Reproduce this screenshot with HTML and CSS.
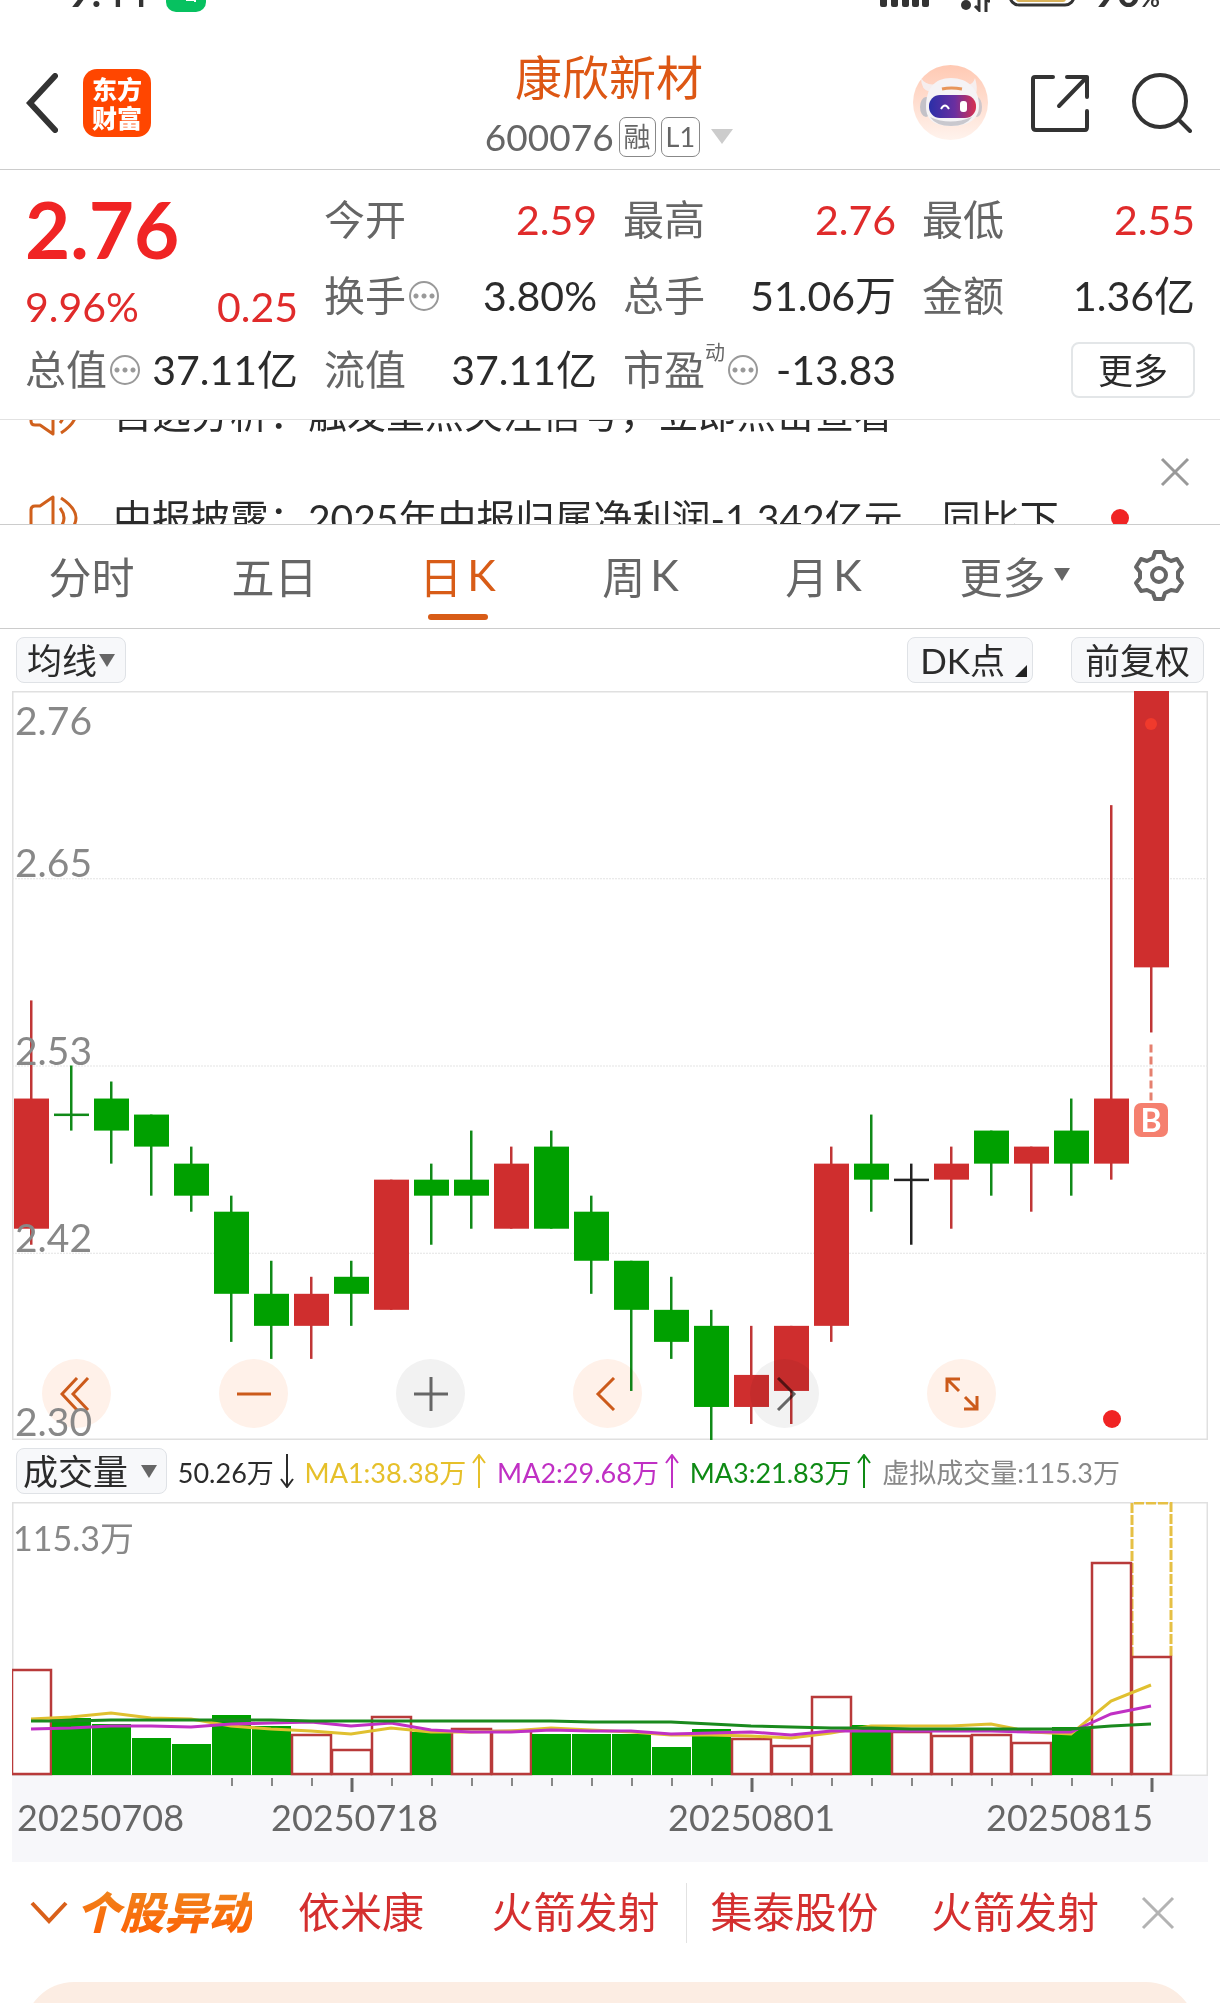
FILE: index.html
```html
<!DOCTYPE html>
<html lang="zh-CN">
<head>
<meta charset="utf-8">
<meta name="viewport" content="width=device-width, initial-scale=1">
<title>康欣新材 600076</title>
<link rel="stylesheet" href="styles.css">
</head>
<body>
<div class="status">
  <div class="status-side">
    <span class="clock">9:44</span>
    <svg class="status-app" viewBox="0 0 40 40" aria-hidden="true"><rect width="40" height="40" rx="10" fill="#07c160"/><path d="M20 28h9v2" fill="none" stroke="#fff" stroke-width="2"/></svg>
  </div>
  <div class="status-side">
    <svg class="signal" viewBox="0 0 50 20" aria-hidden="true"><g fill="#333"><rect y="10" width="7" height="10" rx="2"/><rect x="11" y="8" width="7" height="12" rx="2"/><rect x="22" y="5" width="7" height="15" rx="2"/><rect x="32" y="2" width="7" height="18" rx="2"/><rect x="42" width="7" height="20" rx="2"/></g></svg>
    <svg class="wifi" viewBox="0 0 34 24" aria-hidden="true"><g fill="none" stroke="#333" stroke-width="3"><path d="M1 10q9-9 18 0M23 8v14l-4-4M30 24V10l4 4"/></g><circle cx="10" cy="17" r="5" fill="#333"/></svg>
    <svg class="battery" viewBox="0 0 68 34" aria-hidden="true"><rect x="2" y="2" width="64" height="30" rx="9" fill="#fff" stroke="#333" stroke-width="3"/><rect x="8" y="7" width="50" height="22" rx="3" fill="#d9b25a"/></svg>
    <span class="charge">90<small>%</small></span>
  </div>
</div>

<header class="header">
  <div class="header-left">
    <button class="icon-btn" aria-label="返回"><svg width="32" height="60" viewBox="0 0 32 60"><path d="M29 3 4 30l25 27" fill="none" stroke="#333" stroke-width="6" stroke-linecap="round"/></svg></button>
    <a class="logo" href="#">东方财富</a>
  </div>
  <div class="header-mid">
    <h1>康欣新材</h1>
    <div class="code"><span>600076</span><span class="tag">融</span><span class="tag">L1</span><svg class="code-caret" viewBox="0 0 22 15"><path d="M0 0h22L11 15z" fill="#ccc"/></svg></div>
  </div>
  <div class="header-right">
    <button class="icon-btn" aria-label="智能助手"><svg width="75" height="75" viewBox="0 0 75 75">
      <defs><linearGradient id="halo" x2="0" y2="1"><stop stop-color="#ffc9b3"/><stop offset="1" stop-color="#fff3ed"/></linearGradient><linearGradient id="visor"><stop stop-color="#2a2fa8"/><stop offset=".55" stop-color="#6a2fa0"/><stop offset="1" stop-color="#d8304f"/></linearGradient></defs>
      <circle cx="37.500" cy="37.500" r="37.500" fill="url(#halo)"/>
      <ellipse cx="13" cy="42" rx="6" ry="10" fill="#c4c2c8"/><ellipse cx="64" cy="42" rx="5" ry="10" fill="#cfc6ca"/>
      <path d="M8 13q0 12 9 14l6-8q-10 2-15-6zM62 13q3 10 1 16l-9-9q6 0 8-7z" fill="#f6eeee"/>
      <path d="M13 42c0-18 8-29 25-29s28 11 28 28c0 14-12 20-28 20S13 55 13 42z" fill="#f5f3f5"/>
      <path d="M17 52q20 9 42 0-6 9-21 9t-21-9z" fill="#c9c8ce"/>
      <path d="M29 24q9-2 20 0" fill="none" stroke="#e8965a" stroke-width="3"/>
      <rect x="16" y="30" width="47" height="23" rx="11" fill="url(#visor)"/>
      <path d="M28 44q4-7 8 0" fill="none" stroke="#fff" stroke-width="2"/><rect x="47" y="36" width="7" height="11" rx="3" fill="#fff"/>
    </svg></button>
    <button class="icon-btn" aria-label="分享"><svg width="60" height="60" viewBox="0 0 60 60" fill="none" stroke="#333" stroke-width="4" stroke-linecap="round" stroke-linejoin="round"><path d="M23 4H5q-2 0-2 2v48q0 3 3 3h49q2 0 2-3V38M37 4h20v20M57 4 29 33"/></svg></button>
    <button class="icon-btn" aria-label="搜索"><svg width="60" height="60" viewBox="0 0 60 60" fill="none" stroke="#333" stroke-width="4" stroke-linecap="round"><circle cx="28" cy="28" r="26"/><path d="m47 47 11 11"/></svg></button>
  </div>
</header>

<section class="quote">
  <div class="price up">2.76</div>
  <div class="cell"><span class="label">今开</span><span class="val up">2.59</span></div>
  <div class="cell"><span class="label">最高</span><span class="val up">2.76</span></div>
  <div class="cell"><span class="label">最低</span><span class="val up">2.55</span></div>
  <div class="cell change"><span class="val up">9.96%</span><span class="val up">0.25</span></div>
  <div class="cell"><span class="label">换手<i class="hint"></i></span><span class="val">3.80%</span></div>
  <div class="cell"><span class="label">总手</span><span class="val">51.06万</span></div>
  <div class="cell"><span class="label">金额</span><span class="val">1.36亿</span></div>
  <div class="cell"><span class="label">总值<i class="hint"></i></span><span class="val">37.11亿</span></div>
  <div class="cell"><span class="label">流值</span><span class="val">37.11亿</span></div>
  <div class="cell"><span class="label">市盈<sup>动</sup><i class="hint"></i></span><span class="val">-13.83</span></div>
  <div class="cell more"><button class="more-btn">更多</button></div>
</section>

<section class="ticker">
  <ul class="ticker-list">
    <li><svg class="speaker" viewBox="0 0 50 46"><g fill="none" stroke="#d0601c" stroke-width="3" stroke-linejoin="round"><path d="M2 15q0-4 4-4h5L24 2v42L11 35H6q-4 0-4-4zM31 13q8 10 0 20M32 3q30 20 0 40"/></g></svg><a href="#">自选分析：触发重点关注信号，立即点击查看</a></li>
    <li><svg class="speaker" viewBox="0 0 50 46"><g fill="none" stroke="#d0601c" stroke-width="3" stroke-linejoin="round"><path d="M2 15q0-4 4-4h5L24 2v42L11 35H6q-4 0-4-4zM31 13q8 10 0 20M32 3q30 20 0 40"/></g></svg><a href="#">中报披露：2025年中报归属净利润-1.342亿元，同比下</a><i class="dot"></i></li>
  </ul>
  <button class="icon-btn" aria-label="关闭"><svg width="30" height="30" viewBox="0 0 30 30"><path d="m2 2 26 26M28 2 2 28" stroke="#999" stroke-width="3"/></svg></button>
</section>

<nav class="tabs">
  <button>分时</button>
  <button>五日</button>
  <button class="active">日<span>K</span></button>
  <button>周<span>K</span></button>
  <button>月<span>K</span></button>
  <button class="tab-more">更多<i class="caret"></i></button>
  <button aria-label="设置"><svg width="52" height="52" viewBox="0 0 52 52" fill="none" stroke="#666" stroke-width="4" stroke-linejoin="round"><path d="M22 3h8l2 6 6 3 6-2 5 8-4 5v6l4 5-5 8-6-1-6 3-2 6h-8l-2-6-6-3-6 1-5-8 4-5v-6l-4-5 5-8 6 2 6-3z"/><circle cx="26" cy="26" r="7"/></svg></button>
</nav>

<div class="toolbar">
  <button class="chip">均线<i class="caret"></i></button>
  <span class="grow"></span>
  <button class="chip chip-dk">DK点<i class="corner"></i></button>
  <button class="chip chip-wide">前复权</button>
</div>

<section class="plot kline">
  <svg id="kline" viewBox="0 0 1196 748" preserveAspectRatio="none" aria-label="日K线"></svg>
  <div class="controls">
    <button aria-label="最左"><svg viewBox="0 0 34 34"><path d="M17 1 2 17l15 16M28 1 13 17l15 16"/></svg></button>
    <button aria-label="缩小"><svg viewBox="0 0 34 34"><path d="M0 17h34"/></svg></button>
    <button class="off" aria-label="放大"><svg viewBox="0 0 34 34"><path d="M0 17h34M17 0v34"/></svg></button>
    <button aria-label="左移"><svg viewBox="0 0 34 34"><path d="M23 1 7 17l16 16"/></svg></button>
    <button class="off" aria-label="右移"><svg viewBox="0 0 34 34"><path d="m10 1 16 16-16 16"/></svg></button>
    <button aria-label="全屏"><svg viewBox="0 0 34 34"><path d="M2 15V2h13M2 2l12 12M32 19v13H19M32 32 20 20"/></svg></button>
  </div>
  <div class="scale"><div><span>2.76</span><span>2.65</span></div><div><span>2.53</span></div><div><span>2.42</span></div><div><span>2.30</span></div></div>
  <span class="buy">B</span>
  <i class="dot kline-dot"></i>
</section>

<div class="legend">
  <button class="chip">成交量<i class="caret"></i></button>
  <span>50.26万<svg viewBox="0 0 14 34"><path d="M7 0v32M1 25l6 8 6-8"/></svg></span>
  <span class="ma1">MA1:38.38万<svg viewBox="0 0 14 34"><path d="M7 34V2M1 9l6-8 6 8"/></svg></span>
  <span class="ma2">MA2:29.68万<svg viewBox="0 0 14 34"><path d="M7 34V2M1 9l6-8 6 8"/></svg></span>
  <span class="ma3">MA3:21.83万<svg viewBox="0 0 14 34"><path d="M7 34V2M1 9l6-8 6 8"/></svg></span>
  <span class="virtual">虚拟成交量:115.3万</span>
</div>

<section class="plot volume">
  <svg id="volume" viewBox="0 0 1196 274" preserveAspectRatio="none" aria-label="成交量"></svg>
  <span class="volume-max">115.3万</span>
</section>
<div class="axis">
  <svg id="ticks" viewBox="0 0 1196 16" preserveAspectRatio="none" aria-hidden="true"></svg>
  <div class="dates"><span>20250708</span><span>20250718</span><span>20250801</span><span>20250815</span></div>
</div>

<section class="alerts">
  <svg class="alerts-arrow" viewBox="0 0 38 26"><path d="m2 3 17 18L36 3" fill="none" stroke="#d9601a" stroke-width="4"/></svg>
  <strong>个股异动</strong>
  <a class="pair" href="#"><span>依米康</span><span>火箭发射</span></a>
  <a class="pair" href="#"><span>集泰股份</span><span>火箭发射</span></a>
  <button class="icon-btn" aria-label="关闭"><svg width="34" height="34" viewBox="0 0 34 34"><path d="m2 2 30 30M32 2 2 32" stroke="#b3b3b3" stroke-width="3"/></svg></button>
</section>
<div class="sheet"></div>
<script src="script.js"></script>
</body>
</html>
```
FILE: styles.css
```css
* { box-sizing: border-box; }
body {
  margin: 0;
  background: #fff;
  color: #2b2b2b;
  font-family: Lato, "Noto Sans CJK SC", sans-serif;
  overflow-x: hidden;
}
button { margin: 0; padding: 0; border: 0; background: none; color: inherit; font: inherit; }
a { color: inherit; text-decoration: none; }
svg { display: block; flex: none; }
.up { color: #e02b2b; }
.dot { width: 18px; height: 18px; border-radius: 50%; background: #f02424; }

/* status bar, scrolled mostly out of view */
.status { display: flex; justify-content: space-between; align-items: flex-end; height: 12px; padding: 0 60px 0 68px; overflow: hidden; }
.status-side { display: flex; align-items: flex-end; gap: 18px; }
.clock, .charge { font-size: 40px; line-height: 40px; font-weight: 700; color: #333; }
.charge small { font-size: 24px; line-height: 24px; }
.status-app { width: 40px; height: 40px; }
.signal { width: 50px; height: 20px; margin-bottom: 5px; }
.wifi { width: 34px; height: 24px; margin-left: 8px; }
.battery { width: 68px; height: 34px; margin-bottom: 5px; }

.header { display: grid; grid-template-columns: 1fr auto 1fr; align-items: center; height: 158px; padding: 24px 28px 0 26px; border-bottom: 1px solid #ccc; }
.header-left, .header-right { display: flex; align-items: center; }
.header-left { gap: 25px; }
.header-right { gap: 42px; justify-content: flex-end; }
.icon-btn { display: flex; align-items: center; }
.logo { width: 68px; height: 68px; padding: 5px 9px; border-radius: 14px; background: #ff4600; color: #fff; font: 900 25px/29px "Noto Sans CJK SC", sans-serif; }
.header-mid { display: flex; flex-direction: column; align-items: center; gap: 2px; padding-top: 6px; }
h1 { margin: 0; font-size: 47px; line-height: 60px; font-weight: 400; color: #dd5714; }
.code { display: flex; align-items: center; gap: 5px; font-size: 37px; line-height: 56px; color: #666; }
.tag { padding: 0 4px; border: 1px solid #888; border-radius: 7px; font-size: 27px; line-height: 38px; }
.code-caret { width: 22px; height: 15px; margin-left: 6px; }

.quote { display: grid; grid-template-columns: repeat(4, 1fr); grid-template-rows: 76px 76px 72px; column-gap: 26px; height: 250px; padding: 12px 25px 0; border-bottom: 1px solid #e2e2e2; }
.cell { display: flex; align-items: center; justify-content: space-between; font-size: 41px; line-height: 60px; white-space: nowrap; }
.change { padding-top: 22px; }
.price { font-size: 78px; line-height: 94px; font-weight: 700; color: #f02424; }
.label { display: flex; align-items: center; color: #666; }
.label sup { align-self: flex-start; font-size: 20px; line-height: 24px; }
.hint { width: 30px; height: 30px; margin-left: 3px; border: 2px solid #999; border-radius: 50%; background: radial-gradient(circle, #999 2px, transparent 3px) center / 8px 26px repeat-x content-box; padding: 0 1px; }
.more { justify-content: flex-end; }
.more-btn { width: 124px; height: 56px; border: 2px solid #e3e6e8; border-radius: 8px; font-size: 35px; line-height: 50px; }

.ticker { display: flex; align-items: center; height: 105px; padding: 0 30px 0 29px; overflow: hidden; border-bottom: 1px solid #ccc; }
.ticker-list { flex: 1; align-self: flex-start; margin: -60px 0 0; padding: 0; list-style: none; }
.ticker-list li { display: flex; align-items: center; height: 105px; font-size: 39px; white-space: nowrap; }
.ticker-list a { width: 998px; margin-left: 34px; padding-bottom: 4px; }
.speaker { width: 50px; height: 46px; }

.tabs { display: grid; grid-template-columns: repeat(6, 15fr) 10fr; height: 104px; border-bottom: 1px solid #ccc; color: #666; font-size: 43px; }
.tabs button { display: flex; align-items: center; justify-content: center; position: relative; padding-bottom: 4px; }
.tabs .tab-more { padding-left: 16px; }
.tabs span { margin-left: 5px; }
.tabs .active { color: #d85c17; }
.tabs .active::after { content: ""; position: absolute; left: 50%; bottom: 8px; width: 60px; height: 6px; margin-left: -30px; border-radius: 3px; background: #d85c17; }
.caret { border: 8px solid transparent; border-top: 13px solid #666; border-bottom: 0; margin-left: 8px; }

.toolbar { display: flex; align-items: center; gap: 38px; height: 62px; padding: 0 16px; }
.grow { flex: 1; }
.chip { display: flex; align-items: center; height: 46px; padding: 0 10px; border: 1px solid #dfe2e6; border-radius: 8px; background: #f7f8fa; font-size: 35px; line-height: 44px; white-space: nowrap; }
.toolbar .caret { margin-left: 2px; }
.toolbar .chip-dk { padding: 0 5px 0 12px; }
.chip-wide { padding: 0 13px; }
.corner { align-self: flex-end; margin: 0 0 5px 10px; border: 6px solid #222; border-top-color: transparent; border-left-color: transparent; }

.plot { position: relative; margin: 0 12px; }
.plot > svg { width: 100%; height: 100%; }
.kline { height: 749px; }
.volume { height: 274px; }
.scale { position: absolute; inset: 0; display: grid; grid-template-rows: repeat(4, 1fr); padding-left: 3px; color: #888; font-size: 39px; line-height: 32px; pointer-events: none; }
.scale div { display: flex; flex-direction: column; justify-content: flex-end; }
.scale div:first-child { justify-content: space-between; padding-top: 13px; }
.scale div:last-child { padding-bottom: 3px; }
.controls { position: absolute; left: 30px; bottom: 12px; display: flex; gap: 108px; mix-blend-mode: multiply; }
.controls button { display: grid; place-items: center; width: 69px; height: 69px; border-radius: 50%; background: #fff1e9; }
.controls .off { background: #f2f2f2; }
.controls svg { width: 34px; height: 34px; fill: none; stroke: #cc5a1a; stroke-width: 3; }
.controls .off svg { stroke: #666; }
.buy { position: absolute; right: 40px; top: 412px; width: 34px; height: 34px; border-radius: 7px; background: #f5806f; color: #fff; font-size: 32px; line-height: 33px; font-weight: 700; text-align: center; }
.kline-dot { position: absolute; right: 87px; bottom: 12px; }

.legend { display: flex; align-items: center; justify-content: space-between; height: 62px; padding: 0 100px 0 16px; font-size: 27px; white-space: nowrap; }
.legend .chip { padding: 0 9px 0 6px; }
.legend .caret { margin-left: 13px; }
.legend span { display: flex; align-items: center; gap: 6px; }
.legend svg { width: 14px; height: 34px; fill: none; stroke: currentColor; stroke-width: 2; }
.ma1 { color: #e6c02a; }
.ma2 { color: #c030c4; }
.ma3 { color: #0e8a14; }
.virtual { color: #888; }
.volume-max { position: absolute; left: 1px; top: 14px; color: #888; font-size: 34px; line-height: 44px; }

.axis { height: 86px; margin: 0 12px; background: #f7f7fa; }
.axis svg { width: 100%; height: 16px; }
.dates { display: grid; grid-template-columns: 254fr 397fr 318fr 222fr; padding: 3px 0 0 5px; color: #666; font-size: 36px; line-height: 44px; }

.alerts { display: flex; align-items: center; height: 104px; padding: 0 45px 2px 30px; font-size: 42px; line-height: 56px; color: #d42f2f; white-space: nowrap; }
.alerts-arrow { width: 38px; height: 26px; }
.alerts strong { margin-left: 8px; padding-bottom: 6px; font: italic 900 44px/56px "Noto Sans CJK SC", sans-serif; color: transparent; background: linear-gradient(#ee8a20, #ff5a00); background-clip: text; -webkit-background-clip: text; }
.pair { display: flex; flex: 1 1 450px; justify-content: space-between; align-items: center; height: 60px; padding: 0 42px 2px 24px; }
.pair:first-of-type { flex-basis: 430px; padding-left: 46px; padding-right: 26px; border-right: 1px solid #e2e2e2; }
.sheet { height: 70px; margin: 16px 24px -49px; border-radius: 50px 50px 0 0; background: #fcede3; }
```
FILE: script.js
```js
// [direction, body top, body bottom, high, low, volume height, volume bar style]
const days = [
  ['r', 2.51, 2.43, 2.57, 2.42, 105], ['g', 2.50, 2.50, 2.53, 2.49, 57],
  ['g', 2.51, 2.49, 2.52, 2.47, 51], ['g', 2.50, 2.48, 2.50, 2.45, 37],
  ['g', 2.47, 2.45, 2.48, 2.44, 31], ['g', 2.44, 2.39, 2.45, 2.36, 60],
  ['g', 2.39, 2.37, 2.41, 2.35, 49], ['r', 2.39, 2.37, 2.40, 2.35, 40],
  ['g', 2.40, 2.39, 2.41, 2.37, 25, 'r'], ['r', 2.46, 2.38, 2.46, 2.38, 58],
  ['g', 2.46, 2.45, 2.47, 2.42, 43], ['g', 2.46, 2.45, 2.49, 2.43, 46, 'r'],
  ['r', 2.47, 2.43, 2.48, 2.43, 44, 'r'], ['g', 2.48, 2.43, 2.49, 2.43, 41],
  ['g', 2.44, 2.41, 2.45, 2.39, 41], ['g', 2.41, 2.38, 2.41, 2.33, 41],
  ['g', 2.38, 2.36, 2.40, 2.35, 28], ['g', 2.37, 2.32, 2.38, 2.30, 46],
  ['r', 2.34, 2.32, 2.37, 2.31, 36], ['r', 2.37, 2.33, 2.37, 2.31, 29],
  ['r', 2.47, 2.37, 2.48, 2.36, 78], ['g', 2.47, 2.46, 2.50, 2.44, 50],
  ['k', 2.46, 2.46, 2.47, 2.42, 43, 'r'], ['r', 2.47, 2.46, 2.48, 2.43, 39],
  ['g', 2.49, 2.47, 2.49, 2.45, 40, 'r'], ['r', 2.48, 2.47, 2.48, 2.44, 32],
  ['g', 2.49, 2.47, 2.51, 2.45, 48], ['r', 2.51, 2.47, 2.69, 2.46, 212],
  ['r', 2.76, 2.59, 2.76, 2.55, 118]
];
const colors = { r: '#cf2e2e', g: '#00a000', k: '#222' };
const wicks = { r: '#c03636', g: '#108a18', k: '#222' };
const y = p => Math.round((2.76 - p) * 1626);
const cx = i => 19 + i * 40;

let k = '<rect x=".5" y=".5" width="1195" height="747" fill="none" stroke="#e0e0e0" stroke-width="2"/>';
for (const g of [187, 374, 561]) k += `<path d="M0 ${g}.5H1196" stroke="#e4e4e4" stroke-dasharray="2 1"/>`;
days.forEach(([c, top, bottom, high, low], i) => {
  const x = cx(i);
  k += `<rect x="${x - 1}" y="${y(high)}" width="2.500" height="${y(low) - y(high)}" fill="${wicks[c]}"/>`;
  k += top === bottom
    ? `<rect x="${x - 17}" y="${y(top) - 1}" width="35" height="2.500" fill="${wicks[c]}"/>`
    : `<rect x="${x - 17}" y="${y(top)}" width="35" height="${y(bottom) - y(top)}" fill="${colors[c]}"/>`;
});
k += '<circle cx="1139" cy="33" r="6" fill="#f03a2c"/>';
k += '<path d="M1139 353v57" stroke="#e5806f" stroke-width="3" stroke-dasharray="8 4"/>';
document.getElementById('kline').innerHTML = k;

const base = 273;
let v = '<rect x=".5" y=".5" width="1195" height="273" fill="none" stroke="#e0e0e0" stroke-width="2"/>';
v += '<path d="M1120 155V1h39v154" fill="none" stroke="#e6c045" stroke-width="3" stroke-dasharray="10 2"/>';
days.forEach(([c, , , , , h, tone], i) => {
  v += (tone || c) === 'g'
    ? `<rect x="${i * 40}" y="${base - h}" width="39" height="${h}" fill="#00a000"/>`
    : `<rect x="${i * 40}" y="${base - h}" width="39" height="${h - 1}" fill="#fff" stroke="#b83a3a" stroke-width="2.500"/>`;
});
const lines = {
  '#e0c030': [217, 215, 211, 216, 217, 224, 227, 229, 232, 226, 230, 230, 229, 226, 228, 230, 233, 233, 234, 236, 231, 224, 224, 224, 222, 230, 232, 199, 183],
  '#c030c4': [227, 226, 224, 224, 225, 222, 221, 220, 224, 221, 228, 230, 230, 228, 229, 229, 232, 231, 230, 233, 229, 229, 229, 229, 229, 230, 230, 212, 204],
  '#1a8a1e': [219, 219, 218, 218, 218, 218, 218, 219, 219, 219, 219, 219, 219, 219, 220, 220, 220, 222, 224, 225, 226, 226, 227, 227, 227, 227, 227, 224, 222]
};
for (const color in lines) {
  v += `<polyline points="${lines[color].map((p, i) => cx(i) + ',' + p).join(' ')}" fill="none" stroke="${color}" stroke-width="3"/>`;
}
document.getElementById('volume').innerHTML = v;

let t = '';
for (let i = 5; i < 29; i++) {
  t += i % 10 === 8
    ? `<path d="M${cx(i) + 1} 2v14" stroke="#666" stroke-width="3"/>`
    : `<path d="M${cx(i) + 1} 2v8" stroke="#888" stroke-width="2"/>`;
}
document.getElementById('ticks').innerHTML = t;
```
